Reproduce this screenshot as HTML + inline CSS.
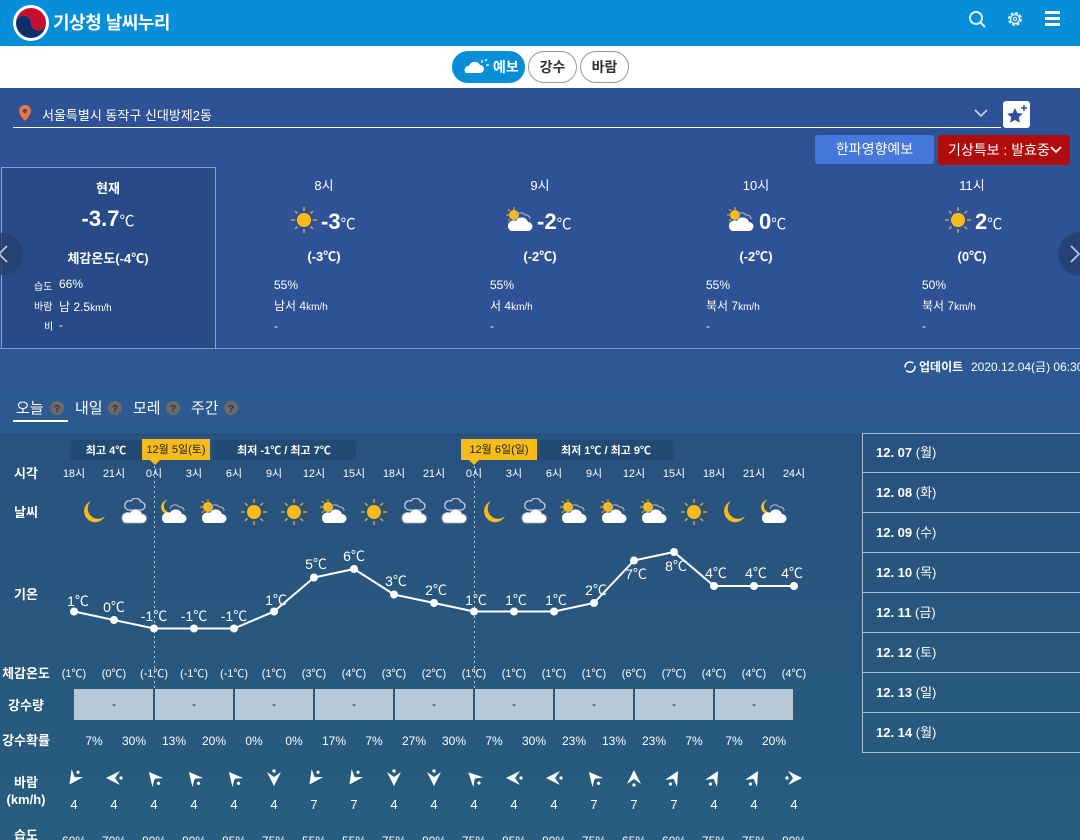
<!DOCTYPE html>
<html><head><meta charset="utf-8">
<style>
*{margin:0;padding:0;box-sizing:border-box}
body{width:1080px;height:840px;overflow:hidden;font-family:"Liberation Sans","Noto Sans CJK KR",sans-serif;color:#fff;position:relative;background:#285c80}
.abs{position:absolute}
#hdr{left:0;top:0;width:1080px;height:46px;background:#068ed9}
#tabs{left:0;top:46px;width:1080px;height:42px;background:#fff}
.pill{position:absolute;top:5px;height:32px;border-radius:16px;border:1px solid #999;color:#333;font-size:14px;font-weight:bold;line-height:30px;text-align:center;background:#fff}
#loc{left:0;top:88px;width:1080px;height:262px;background:#2f5195}
#low{left:0;top:350px;width:1080px;height:84px;background:linear-gradient(#2d5895,#2c5b8f)}
#chart{left:0;top:433px;width:1080px;height:407px;background:linear-gradient(#28527f,#275d7e)}
.cur{left:1px;top:167px;width:215px;height:182px;background:#284a86;border:1px solid #8aa0c8}
.t{position:absolute;text-align:center;width:216px}
.sm{font-size:12px}
</style></head><body>
<div id="hdr" class="abs">
 <svg class="abs" style="left:12px;top:4px" width="38" height="38" viewBox="0 0 38 38">
  <circle cx="19" cy="19" r="18" fill="#fff"/>
  <path d="M4 19 A15 15 0 0 1 34 19 A7.5 7.5 0 0 1 19 19 A7.5 7.5 0 0 0 4 19Z" fill="#c8102e"/>
  <path d="M4 19 A15 15 0 0 0 34 19 A7.5 7.5 0 0 1 19 19 A7.5 7.5 0 0 0 4 19Z" fill="#0f2f6b"/>
 </svg>
 <div class="abs" style="left:53px;top:9px;font-size:18px;font-weight:bold;letter-spacing:-0.5px">기상청 날씨누리</div>
 <svg class="abs" style="left:968px;top:10px" width="20" height="20"><circle cx="8" cy="8" r="6" fill="none" stroke="#d8ecf8" stroke-width="2"/><line x1="12.5" y1="12.5" x2="17" y2="17" stroke="#d8ecf8" stroke-width="2"/></svg>
 <svg class="abs" style="left:1005px;top:9px" width="20" height="20" viewBox="0 0 20 20"><circle cx="10" cy="10" r="6" fill="none" stroke="#d8ecf8" stroke-width="2" stroke-dasharray="3 1.7"/><circle cx="10" cy="10" r="4.5" fill="none" stroke="#d8ecf8" stroke-width="1.5"/><circle cx="10" cy="10" r="1.6" fill="none" stroke="#d8ecf8" stroke-width="1.2"/></svg>
 <div class="abs" style="left:1045px;top:11px;width:15px;height:3px;background:#fff;box-shadow:0 6px 0 #fff,0 12px 0 #fff"></div>
</div>
<div id="tabs" class="abs">
 <div class="pill" style="left:452px;width:73px;background:#068ed9;border-color:#068ed9;color:#fff">
  <svg style="position:absolute;left:10px;top:7px" width="26" height="16"><path d="M3 14h14a4 4 0 0 0 0-8a6 6 0 0 0-11 1a4 4 0 0 0-3 7z" fill="#fff"/><g stroke="#fff" stroke-width="1.3"><line x1="19" y1="1" x2="19" y2="4"/><line x1="23" y1="6" x2="26" y2="6"/><line x1="22" y1="2" x2="24" y2="0"/></g></svg>
  <span style="position:absolute;left:40px">예보</span></div>
 <div class="pill" style="left:528px;width:49px">강수</div>
 <div class="pill" style="left:580px;width:49px">바람</div>
</div>
<div id="loc" class="abs"></div>
<div id="low" class="abs"></div>
<div id="chart" class="abs"></div>
<svg class="abs" style="left:19px;top:105px" width="12" height="16"><path d="M6 0a6 6 0 0 1 6 6c0 4-6 10-6 10S0 10 0 6a6 6 0 0 1 6-6z" fill="#f0743c"/><circle cx="6" cy="6" r="2.2" fill="#2f5195"/></svg>
<div class="abs" style="left:42px;top:105px;font-size:13px">서울특별시 동작구 신대방제2동</div>
<div class="abs" style="left:13px;top:127px;width:988px;height:1px;background:#fff"></div>
<svg class="abs" style="left:974px;top:108px" width="14" height="10"><path d="M1 2l6 6 6-6" fill="none" stroke="#c8d4ea" stroke-width="1.6"/></svg>
<div class="abs" style="left:1003px;top:101px;width:27px;height:27px;background:#fff;border-radius:3px"></div>
<svg class="abs" style="left:1005px;top:103px" width="24" height="24"><path d="M10 5l2.4 5 5.4.6-4 3.7 1.1 5.3L10 17l-4.9 2.6 1.1-5.3-4-3.7 5.4-.6z" fill="#2d4f9c"/><path d="M19 2v6M16 5h6" stroke="#2d4f9c" stroke-width="1.5"/></svg>
<div class="abs" style="left:815px;top:135px;width:119px;height:29px;background:#4677dc;border-radius:3px;font-size:14px;text-align:center;line-height:29px">한파영향예보</div>
<div class="abs" style="left:938px;top:135px;width:132px;height:30px;background:#b10c0c;border-radius:3px;font-size:14px;line-height:30px;padding-left:10px">기상특보 : 발효중<svg style="position:absolute;left:112px;top:11px" width="12" height="9"><path d="M1 1l5 5 5-5" fill="none" stroke="#fff" stroke-width="1.8"/></svg></div>
<div class="abs cur"></div>
<div class="abs" style="left:0;top:348px;width:1080px;height:1px;background:#7f97c3"></div>
<div class="t" style="left:0;top:178px;font-size:13px;font-weight:bold">현재</div>
<div class="t" style="left:0;top:206px;font-size:22px;font-weight:bold">-3.7<span style="font-size:15px;font-weight:normal">℃</span></div>
<div class="t" style="left:0;top:248px;font-size:13px;font-weight:bold">체감온도(-4℃)</div>
<div class="abs sm" style="left:34px;top:278px;font-size:10px">습도</div><div class="abs sm" style="left:59px;top:277px">66%</div>
<div class="abs sm" style="left:34px;top:298px;font-size:10px">바람</div><div class="abs sm" style="left:59px;top:298px">남 2.5<span style="font-size:10px">km/h</span></div>
<div class="abs sm" style="left:44px;top:318px;font-size:10px">비</div><div class="abs sm" style="left:59px;top:318px">-</div>
<svg width="0" height="0" style="position:absolute"><defs>
 <symbol id="sun" viewBox="-14 -14 28 28"><g stroke="#d6a93c" stroke-width="1.4"><line x1="0" y1="-13" x2="0" y2="-9"/><line x1="0" y1="13" x2="0" y2="9"/><line x1="-13" y1="0" x2="-9" y2="0"/><line x1="13" y1="0" x2="9" y2="0"/><line x1="-9" y1="-9" x2="-6.5" y2="-6.5"/><line x1="9" y1="9" x2="6.5" y2="6.5"/><line x1="-9" y1="9" x2="-6.5" y2="6.5"/><line x1="9" y1="-9" x2="6.5" y2="-6.5"/></g><circle r="7" fill="#f8bb1c"/></symbol>
 <symbol id="moon" viewBox="-14 -14 28 28"><path d="M-3 -11 A11 11 0 1 0 11 4 A9 9 0 0 1 -3 -11Z" fill="#f8bb1c"/></symbol>
 <symbol id="cloud" viewBox="-14 -14 28 28"><path d="M-8 2h13a4 4 0 0 0 0-8a5.5 5.5 0 0 0-10-1a4 4 0 0 0-3 9z" fill="none" stroke="#ccd" stroke-width="1.3" transform="translate(2,-4)"/><path d="M-9 11h17a4.5 4.5 0 0 0 0-9a6.5 6.5 0 0 0-12-1a4.5 4.5 0 0 0-5 10z" fill="#fff" stroke="#aab" stroke-width=".8"/></symbol>
 <symbol id="sc" viewBox="-14 -14 28 28"><g stroke="#d6a93c" stroke-width="1.2"><line x1="-6" y1="-13" x2="-6" y2="-10"/><line x1="-14" y1="-5" x2="-11" y2="-5"/><line x1="-12" y1="-11" x2="-10" y2="-9"/><line x1="-12" y1="1" x2="-10" y2="-1"/></g><circle cx="-6" cy="-5" r="5" fill="#f8bb1c"/><path d="M-4 -3a5 5 0 0 1 9-2a4 4 0 0 1 5 4" fill="none" stroke="#aab" stroke-width="1.2"/><path d="M-9 11h17a4.5 4.5 0 0 0 0-9a6.5 6.5 0 0 0-12-1a4.5 4.5 0 0 0-5 10z" fill="#fff"/></symbol>
 <symbol id="mc" viewBox="-14 -14 28 28"><path d="M-6 -12 A7 7 0 1 0 -1 0 A6 6 0 0 1 -6 -12Z" fill="#f8bb1c"/><path d="M-4 -3a5 5 0 0 1 9-2a4 4 0 0 1 5 4" fill="none" stroke="#aab" stroke-width="1.2"/><path d="M-9 11h17a4.5 4.5 0 0 0 0-9a6.5 6.5 0 0 0-12-1a4.5 4.5 0 0 0-5 10z" fill="#fff"/></symbol>
 <symbol id="wd" viewBox="-10 -10 20 20"><path d="M-7 -6L0 8L7 -6L0 -1Z" fill="#fff"/><circle cx="0" cy="-7" r="1.6" fill="#fff"/></symbol>
</defs></svg>
<svg class="abs" style="left:0;top:0" width="1080" height="840" font-family="Liberation Sans,Noto Sans CJK KR,sans-serif" fill="#fff">
 <g font-size="13" text-anchor="middle">
  <text x="324" y="190">8시</text><text x="540" y="190">9시</text><text x="756" y="190">10시</text><text x="972" y="190">11시</text>
 </g>
 <use href="#sun" x="290" y="206" width="28" height="28"/><use href="#sc" x="506" y="206" width="28" height="28"/><use href="#sc" x="727" y="206" width="28" height="28"/><use href="#sun" x="944" y="206" width="28" height="28"/>
 <g font-size="22" font-weight="bold"><text x="321" y="229">-3<tspan font-size="15" font-weight="normal">℃</tspan></text><text x="537" y="229">-2<tspan font-size="15" font-weight="normal">℃</tspan></text><text x="759" y="229">0<tspan font-size="15" font-weight="normal">℃</tspan></text><text x="975" y="229">2<tspan font-size="15" font-weight="normal">℃</tspan></text></g>
 <g font-size="13" font-weight="bold" text-anchor="middle"><text x="324" y="261">(-3℃)</text><text x="540" y="261">(-2℃)</text><text x="756" y="261">(-2℃)</text><text x="972" y="261">(0℃)</text></g>
 <g font-size="12"><text x="274" y="289">55%</text><text x="490" y="289">55%</text><text x="706" y="289">55%</text><text x="922" y="289">50%</text>
  <text x="274" y="310">남서 4<tspan font-size="10">km/h</tspan></text><text x="490" y="310">서 4<tspan font-size="10">km/h</tspan></text><text x="706" y="310">북서 7<tspan font-size="10">km/h</tspan></text><text x="922" y="310">북서 7<tspan font-size="10">km/h</tspan></text>
  <text x="274" y="330">-</text><text x="490" y="330">-</text><text x="706" y="330">-</text><text x="922" y="330">-</text></g>
 <circle cx="2" cy="254" r="21" fill="#24406e" opacity=".8"/><path d="M7 246l-8 8 8 8" fill="none" stroke="#ccd" stroke-width="1.6"/>
 <circle cx="1080" cy="254" r="22" fill="#24406e" opacity=".8"/><path d="M1071 246l8 8-8 8" fill="none" stroke="#ccd" stroke-width="1.6"/>
 <circle cx="910" cy="367" r="5" fill="none" stroke="#fff" stroke-width="1.5" stroke-dasharray="12 3"/>
 <text x="919" y="371" font-size="12" font-weight="bold">업데이트</text><text x="971" y="371" font-size="12">2020.12.04(금) 06:30</text>
 <g font-size="15"><text x="16" y="413">오늘</text><text x="75" y="413">내일</text><text x="133" y="413">모레</text><text x="191" y="413">주간</text></g>
 <g fill="#6a6a6a"><circle cx="57" cy="408" r="7"/><circle cx="115" cy="408" r="7"/><circle cx="173" cy="408" r="7"/><circle cx="231" cy="408" r="7"/></g>
 <g font-size="10" font-weight="bold" fill="#333" text-anchor="middle"><text x="57" y="412">?</text><text x="115" y="412">?</text><text x="173" y="412">?</text><text x="231" y="412">?</text></g>
 <rect x="13" y="420" width="55" height="2" fill="#fff"/>
 <g fill="none" stroke="#a8bccc" stroke-width="1"><rect x="862.5" y="433.5" width="230" height="319"/><line x1="862" y1="472.5" x2="1080" y2="472.5"/><line x1="862" y1="512.5" x2="1080" y2="512.5"/><line x1="862" y1="552.5" x2="1080" y2="552.5"/><line x1="862" y1="592.5" x2="1080" y2="592.5"/><line x1="862" y1="632.5" x2="1080" y2="632.5"/><line x1="862" y1="672.5" x2="1080" y2="672.5"/><line x1="862" y1="712.5" x2="1080" y2="712.5"/></g>
 <g font-size="13"><text x="876" y="457"><tspan font-weight="bold">12. 07</tspan> (월)</text><text x="876" y="497"><tspan font-weight="bold">12. 08</tspan> (화)</text><text x="876" y="537"><tspan font-weight="bold">12. 09</tspan> (수)</text><text x="876" y="577"><tspan font-weight="bold">12. 10</tspan> (목)</text><text x="876" y="617"><tspan font-weight="bold">12. 11</tspan> (금)</text><text x="876" y="657"><tspan font-weight="bold">12. 12</tspan> (토)</text><text x="876" y="697"><tspan font-weight="bold">12. 13</tspan> (일)</text><text x="876" y="737"><tspan font-weight="bold">12. 14</tspan> (월)</text></g>
 <rect x="70" y="440" width="72" height="20" rx="3" fill="#234a72"/><rect x="212" y="440" width="144" height="20" rx="3" fill="#234a72"/><rect x="538" y="440" width="136" height="20" rx="3" fill="#234a72"/>
 <rect x="142" y="439" width="68" height="21" fill="#f8bb1c"/><path d="M150 460l5 5 5-5z" fill="#f8bb1c"/>
 <rect x="461" y="439" width="76" height="21" fill="#f8bb1c"/><path d="M469 460l5 5 5-5z" fill="#f8bb1c"/>
 <g font-size="11" font-weight="bold" text-anchor="middle"><text x="106" y="454">최고 4℃</text><text x="284" y="454">최저 -1℃ / 최고 7℃</text><text x="606" y="454">최저 1℃ / 최고 9℃</text>
  <text x="176" y="453" fill="#222" font-weight="normal">12월 5일(토)</text><text x="499" y="453" fill="#222" font-weight="normal">12월 6일(일)</text></g>
 <g stroke="#bcc8d6" stroke-width="1" stroke-dasharray="2 3"><line x1="154.5" y1="466" x2="154.5" y2="690"/><line x1="474.5" y1="466" x2="474.5" y2="690"/></g>
 <g font-size="13" font-weight="bold" text-anchor="middle"><text x="26" y="478">시각</text><text x="26" y="517">날씨</text><text x="26" y="599">기온</text><text x="26" y="678">체감온도</text><text x="26" y="710">강수량</text><text x="26" y="745">강수확률</text><text x="26" y="787">바람</text><text x="26" y="804">(km/h)</text><text x="26" y="840">습도</text></g>
 <g font-size="11" text-anchor="middle">
  <text x="74" y="477">18시</text><text x="114" y="477">21시</text><text x="154" y="477">0시</text><text x="194" y="477">3시</text><text x="234" y="477">6시</text><text x="274" y="477">9시</text><text x="314" y="477">12시</text><text x="354" y="477">15시</text><text x="394" y="477">18시</text><text x="434" y="477">21시</text><text x="474" y="477">0시</text><text x="514" y="477">3시</text><text x="554" y="477">6시</text><text x="594" y="477">9시</text><text x="634" y="477">12시</text><text x="674" y="477">15시</text><text x="714" y="477">18시</text><text x="754" y="477">21시</text><text x="794" y="477">24시</text>
 </g>
 <g>
  <use href="#moon" x="80" y="498" width="28" height="28"/><use href="#cloud" x="120" y="498" width="28" height="28"/><use href="#mc" x="160" y="498" width="28" height="28"/><use href="#sc" x="200" y="498" width="28" height="28"/><use href="#sun" x="240" y="498" width="28" height="28"/><use href="#sun" x="280" y="498" width="28" height="28"/><use href="#sc" x="320" y="498" width="28" height="28"/><use href="#sun" x="360" y="498" width="28" height="28"/><use href="#cloud" x="400" y="498" width="28" height="28"/><use href="#cloud" x="440" y="498" width="28" height="28"/><use href="#moon" x="480" y="498" width="28" height="28"/><use href="#cloud" x="520" y="498" width="28" height="28"/><use href="#sc" x="560" y="498" width="28" height="28"/><use href="#sc" x="600" y="498" width="28" height="28"/><use href="#sc" x="640" y="498" width="28" height="28"/><use href="#sun" x="680" y="498" width="28" height="28"/><use href="#moon" x="720" y="498" width="28" height="28"/><use href="#mc" x="760" y="498" width="28" height="28"/>
 </g>
 <polyline points="74,611.5 114,620 154,628.5 194,628.5 234,628.5 274,611.5 314,577.5 354,569 394,594.5 434,603 474,611.5 514,611.5 554,611.5 594,603 634,560.5 674,552 714,586 754,586 794,586" fill="none" stroke="#fff" stroke-width="2"/>
 <g><circle cx="74" cy="611.5" r="4"/><circle cx="114" cy="620" r="4"/><circle cx="154" cy="628.5" r="4"/><circle cx="194" cy="628.5" r="4"/><circle cx="234" cy="628.5" r="4"/><circle cx="274" cy="611.5" r="4"/><circle cx="314" cy="577.5" r="4"/><circle cx="354" cy="569" r="4"/><circle cx="394" cy="594.5" r="4"/><circle cx="434" cy="603" r="4"/><circle cx="474" cy="611.5" r="4"/><circle cx="514" cy="611.5" r="4"/><circle cx="554" cy="611.5" r="4"/><circle cx="594" cy="603" r="4"/><circle cx="634" cy="560.5" r="4"/><circle cx="674" cy="552" r="4"/><circle cx="714" cy="586" r="4"/><circle cx="754" cy="586" r="4"/><circle cx="794" cy="586" r="4"/></g>
 <g font-size="14" text-anchor="middle">
  <text x="78" y="606">1℃</text><text x="114" y="612">0℃</text><text x="154" y="621">-1℃</text><text x="194" y="621">-1℃</text><text x="234" y="621">-1℃</text><text x="276" y="605">1℃</text><text x="316" y="569">5℃</text><text x="354" y="561">6℃</text><text x="396" y="586">3℃</text><text x="436" y="595">2℃</text><text x="476" y="605">1℃</text><text x="516" y="605">1℃</text><text x="556" y="605">1℃</text><text x="596" y="595">2℃</text><text x="636" y="579">7℃</text><text x="676" y="571">8℃</text><text x="716" y="578">4℃</text><text x="756" y="578">4℃</text><text x="792" y="578">4℃</text>
 </g>
 <g font-size="11" text-anchor="middle">
  <text x="74" y="677">(1℃)</text><text x="114" y="677">(0℃)</text><text x="154" y="677">(-1℃)</text><text x="194" y="677">(-1℃)</text><text x="234" y="677">(-1℃)</text><text x="274" y="677">(1℃)</text><text x="314" y="677">(3℃)</text><text x="354" y="677">(4℃)</text><text x="394" y="677">(3℃)</text><text x="434" y="677">(2℃)</text><text x="474" y="677">(1℃)</text><text x="514" y="677">(1℃)</text><text x="554" y="677">(1℃)</text><text x="594" y="677">(1℃)</text><text x="634" y="677">(6℃)</text><text x="674" y="677">(7℃)</text><text x="714" y="677">(4℃)</text><text x="754" y="677">(4℃)</text><text x="794" y="677">(4℃)</text>
 </g>
 <g fill="#b7c8d6"><rect x="74" y="689" width="79" height="31"/><rect x="155" y="689" width="78" height="31"/><rect x="235" y="689" width="78" height="31"/><rect x="315" y="689" width="78" height="31"/><rect x="395" y="689" width="78" height="31"/><rect x="475" y="689" width="78" height="31"/><rect x="555" y="689" width="78" height="31"/><rect x="635" y="689" width="78" height="31"/><rect x="715" y="689" width="78" height="31"/></g>
 <g font-size="12" fill="#222" text-anchor="middle"><text x="114" y="708">-</text><text x="194" y="708">-</text><text x="274" y="708">-</text><text x="354" y="708">-</text><text x="434" y="708">-</text><text x="514" y="708">-</text><text x="594" y="708">-</text><text x="674" y="708">-</text><text x="754" y="708">-</text></g>
 <g font-size="12" text-anchor="middle">
  <text x="94" y="745">7%</text><text x="134" y="745">30%</text><text x="174" y="745">13%</text><text x="214" y="745">20%</text><text x="254" y="745">0%</text><text x="294" y="745">0%</text><text x="334" y="745">17%</text><text x="374" y="745">7%</text><text x="414" y="745">27%</text><text x="454" y="745">30%</text><text x="494" y="745">7%</text><text x="534" y="745">30%</text><text x="574" y="745">23%</text><text x="614" y="745">13%</text><text x="654" y="745">23%</text><text x="694" y="745">7%</text><text x="734" y="745">7%</text><text x="774" y="745">20%</text>
 </g>
 <g>
  <use href="#wd" x="64" y="768" width="20" height="20" transform="rotate(35 74 778)"/><use href="#wd" x="104" y="768" width="20" height="20" transform="rotate(90 114 778)"/><use href="#wd" x="144" y="768" width="20" height="20" transform="rotate(140 154 778)"/><use href="#wd" x="184" y="768" width="20" height="20" transform="rotate(140 194 778)"/><use href="#wd" x="224" y="768" width="20" height="20" transform="rotate(140 234 778)"/><use href="#wd" x="264" y="768" width="20" height="20"/><use href="#wd" x="304" y="768" width="20" height="20" transform="rotate(35 314 778)"/><use href="#wd" x="344" y="768" width="20" height="20" transform="rotate(35 354 778)"/><use href="#wd" x="384" y="768" width="20" height="20"/><use href="#wd" x="424" y="768" width="20" height="20"/><use href="#wd" x="464" y="768" width="20" height="20" transform="rotate(135 474 778)"/><use href="#wd" x="504" y="768" width="20" height="20" transform="rotate(90 514 778)"/><use href="#wd" x="544" y="768" width="20" height="20" transform="rotate(90 554 778)"/><use href="#wd" x="584" y="768" width="20" height="20" transform="rotate(140 594 778)"/><use href="#wd" x="624" y="768" width="20" height="20" transform="rotate(180 634 778)"/><use href="#wd" x="664" y="768" width="20" height="20" transform="rotate(210 674 778)"/><use href="#wd" x="704" y="768" width="20" height="20" transform="rotate(210 714 778)"/><use href="#wd" x="744" y="768" width="20" height="20" transform="rotate(210 754 778)"/><use href="#wd" x="784" y="768" width="20" height="20" transform="rotate(270 794 778)"/>
 </g>
 <g font-size="13" text-anchor="middle">
  <text x="74" y="809">4</text><text x="114" y="809">4</text><text x="154" y="809">4</text><text x="194" y="809">4</text><text x="234" y="809">4</text><text x="274" y="809">4</text><text x="314" y="809">7</text><text x="354" y="809">7</text><text x="394" y="809">4</text><text x="434" y="809">4</text><text x="474" y="809">4</text><text x="514" y="809">4</text><text x="554" y="809">4</text><text x="594" y="809">7</text><text x="634" y="809">7</text><text x="674" y="809">7</text><text x="714" y="809">4</text><text x="754" y="809">4</text><text x="794" y="809">4</text>
 </g>
 <g font-size="12" text-anchor="middle">
  <text x="74" y="845">60%</text><text x="114" y="845">70%</text><text x="154" y="845">80%</text><text x="194" y="845">80%</text><text x="234" y="845">85%</text><text x="274" y="845">75%</text><text x="314" y="845">55%</text><text x="354" y="845">55%</text><text x="394" y="845">75%</text><text x="434" y="845">80%</text><text x="474" y="845">75%</text><text x="514" y="845">85%</text><text x="554" y="845">80%</text><text x="594" y="845">75%</text><text x="634" y="845">65%</text><text x="674" y="845">60%</text><text x="714" y="845">75%</text><text x="754" y="845">75%</text><text x="794" y="845">80%</text>
 </g>
</svg>
</body></html>
